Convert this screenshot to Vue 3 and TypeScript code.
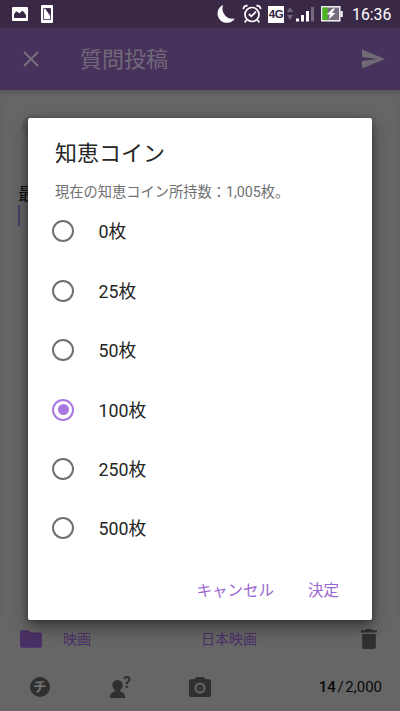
<script setup lang="ts">
import { ref } from 'vue'

const options: number[] = [0, 25, 50, 100, 250, 500]
const selected = ref<number>(100)
</script>

<template>
  <div class="screen">
    <div class="status">
      <svg class="picture" width="16" height="14" viewBox="0 0 16 14">
        <rect width="16" height="14" rx="1" fill="#fff" />
        <path d="M2 11V7.5Q3.5 4 5 4.5L7.5 6.5Q10 3 11.5 4.5L14 8V11Z" fill="#3a2847" />
      </svg>
      <svg class="note" width="12" height="18" viewBox="0 0 12 18">
        <rect width="12" height="18" rx="1" fill="#fff" />
        <path d="M2.5 3.5H9.5V14.5H2.5Z" fill="none" stroke="#3a2847" stroke-width=".8" />
        <path d="M4 3.5H9.7V11.5Z" fill="#3a2847" />
      </svg>
      <svg class="moon" width="20" height="20" viewBox="0 0 20 20">
        <path d="M7.2 1A9.3 9.3 0 1 0 18.8 14.4A10 10 0 0 1 7.2 1Z" fill="#fff" />
      </svg>
      <svg class="alarm" width="20" height="20" viewBox="0 0 20 20" fill="none" stroke="#fff">
        <circle cx="10" cy="10.5" r="7" stroke-width="1.7" />
        <path d="M1.3 5.2C1.6 3 3.5 1.6 5.6 1.7M18.7 5.2C18.4 3 16.5 1.6 14.4 1.7M4.7 16L2.6 18.4M15.3 16L17.4 18.4" stroke-width="1.7" />
        <path d="M6.8 10L9.3 12.3L14 7.7" stroke-width="1.8" />
      </svg>
      <span class="network">4G</span>
      <svg class="arrows" width="6" height="14" viewBox="0 0 6 14" fill="#72677c">
        <path d="M3 0L6 5H0ZM0 8H6L3 13Z" />
      </svg>
      <svg class="signal" width="18" height="16" viewBox="0 0 18 16" fill="#fff">
        <path d="M0 12.5H3V15.5H0ZM5 9H8V15.5H5ZM10 5H13V15.5H10Z" />
        <path d="M15 1H18V15.5H15Z" fill="#746a7c" />
      </svg>
      <svg class="battery" width="22" height="16" viewBox="0 0 22 16">
        <rect x=".8" y=".8" width="18" height="14" fill="#756d7d" stroke="#fff" stroke-width="1.4" />
        <rect x="1.5" y="1.5" width="5" height="12.6" fill="#48b51b" />
        <path d="M19.5 5H21.7V11H19.5Z" fill="#fff" />
        <path d="M12 2.5L5.7 8.5H9L7.8 13.2L14.5 7H11L14 2.5Z" fill="#fff" />
      </svg>
      <time>16:36</time>
    </div>

    <header>
      <svg width="16" height="16" viewBox="0 0 16 16" fill="none" stroke="#77707d" stroke-width="2">
        <path d="M1 1L15 15M15 1L1 15" />
      </svg>
      <h1>質問投稿</h1>
      <svg class="send" width="23" height="20" viewBox="0 0 24 20">
        <path d="M0 0L24 10L0 20V12.2L16 10L0 7.8Z" fill="#706a75" />
      </svg>
    </header>

    <main>
      <span class="avatar"></span>
      <p class="draft">最</p>
      <i class="caret"></i>
    </main>

    <div class="category">
      <svg width="22" height="18" viewBox="0 0 22.5 18">
        <path d="M2 0H8.5L11 2.3H20.5Q22.5 2.3 22.5 4.3V16Q22.5 18 20.5 18H2Q0 18 0 16V2Q0 0 2 0Z" fill="#493065" />
      </svg>
      <span class="parent">映画</span>
      <span class="child">日本映画</span>
      <svg class="trash" width="16" height="20" viewBox="0 0 16 20" fill="#303030">
        <path d="M0 1.2H4.3L5.2 0H10.8L11.7 1.2H16V3.5H0ZM1.2 5H14.8V18Q14.8 20 12.8 20H3.2Q1.2 20 1.2 18Z" />
      </svg>
    </div>

    <footer>
      <span class="coin">チ</span>
      <span class="person">
        <svg width="15" height="18" viewBox="0 0 15 18" fill="#303030">
          <path d="M7.5 0A5.2 5.2 0 0 1 12.7 5.2C12.7 7.5 11.3 9 10.2 10V11.5C12.8 12.6 15 13.7 15 16.3V18H0V16.3C0 13.7 2.2 12.6 4.8 11.5V10C3.7 9 2.3 7.5 2.3 5.2A5.2 5.2 0 0 1 7.5 0Z" />
        </svg>
        <b>?</b>
      </span>
      <svg class="camera" width="22" height="20" viewBox="0 0 22 20">
        <path d="M2 2.3H5.5L7.5 0H14.5L16.5 2.3H20Q22 2.3 22 4.3V18Q22 20 20 20H2Q0 20 0 18V4.3Q0 2.3 2 2.3Z" fill="#303030" />
        <circle cx="11" cy="11" r="4.5" fill="none" stroke="#666" stroke-width="2" />
        <circle cx="11" cy="11" r="1.5" fill="#484848" />
      </svg>
      <span class="count"><b>14</b> / 2,000</span>
    </footer>

    <section class="dialog" role="dialog">
      <h2>知恵コイン</h2>
      <p class="balance">現在の知恵コイン所持数：1,005枚。</p>
      <div class="options">
        <div v-for="value in options" :key="value" class="option" @click="selected = value">
          <span class="radio" :class="{ checked: selected === value }"></span>
          <span class="label">{{ value }}枚</span>
        </div>
      </div>
      <div class="actions">
        <span>キャンセル</span>
        <span>決定</span>
      </div>
    </section>
  </div>
</template>

<style>
body { margin: 0; overflow: hidden; }
</style>

<style scoped>
* { box-sizing: border-box; }
.screen { position: relative; display: flex; flex-direction: column; width: 400px; height: 711px; background: #666; font-family: Roboto, "Noto Sans CJK JP", sans-serif; }
svg { display: block; flex: none; }
span, time { white-space: nowrap; }
.status { display: flex; align-items: center; height: 28px; flex: none; padding-left: 12px; background: #3a2847; color: #fff; }
.note { margin-left: 13px; }
.moon { margin-left: 163px; }
.alarm { margin-left: 6px; }
.network { width: 16px; height: 17px; margin-left: 6px; background: #fff; color: #33233f; font: bold 11.5px/17px "Liberation Sans", sans-serif; letter-spacing: -.5px; text-align: center; }
.arrows { margin-left: 3px; }
.signal { margin-left: 3px; }
.battery { margin-left: 7px; }
time { margin-left: 9px; font-size: 15.8px; line-height: 28px; padding-top: 1px; }
header { display: flex; align-items: center; height: 62px; flex: none; padding: 0 15px 0 23px; background: #47325b; color: #716979; }
h1 { margin: 2px 0 0 41px; font-size: 22px; font-weight: 400; line-height: 30px; }
.send { margin-left: auto; }
main { position: relative; flex: 1; padding: 89px 18px 0; box-shadow: inset 0 5px 5px -3px #555; }
.avatar { position: absolute; left: 22px; top: 26px; width: 22px; height: 22px; border-radius: 50%; background: #5c5c5c; }
.draft { margin: 0; color: #101010; font-size: 17px; line-height: 30px; }
.caret { display: block; width: 2px; height: 21px; margin-top: -4px; background: #4b3b67; }
.category { display: flex; align-items: center; height: 46px; flex: none; padding: 0 23px 0 20px; color: #4b3069; font-size: 14px; }
.parent { margin: -3px 0 0 21px; }
.child { margin: -3px 0 0 110px; }
.trash { margin-left: auto; }
footer { display: flex; align-items: center; height: 49px; flex: none; padding: 0 18px 0 30px; }
.coin { width: 20px; height: 20px; border-radius: 50%; background: #303030; color: #777; font-size: 13px; font-weight: 700; line-height: 19px; text-align: center; }
.person { display: flex; align-items: flex-end; width: 22px; height: 22px; margin-left: 60px; }
.person b { align-self: flex-start; margin: -1px 0 0 -2px; color: #303030; font-size: 16px; line-height: 15px; }
.camera { margin-left: 57px; }
.count { margin-left: auto; color: #080808; font-size: 15px; word-spacing: -2px; }
.count b { font-weight: 500; }
.dialog { position: absolute; left: 28px; top: 118px; width: 344px; height: 502px; padding: 20px 24px 0 27px; border-radius: 2px; background: #fff; box-shadow: 0 7px 18px rgba(0,0,0,.42), 0 1px 6px rgba(0,0,0,.3); color: #262626; }
h2 { margin: 0; font-size: 22px; font-weight: 400; line-height: 32px; }
.balance { margin: 12px 0 0; color: #707070; font-size: 14.25px; line-height: 20px; }
.options { height: 356.7px; margin: -.5px 0 0 -3px; }
.option { display: flex; align-items: center; height: 59.45px; gap: 24.5px; font-size: 17.8px; line-height: 26px; }
.label { margin-top: 2px; }
.radio { display: flex; align-items: center; justify-content: center; flex: none; width: 22px; height: 22px; border: 2px solid #707070; border-radius: 50%; }
.checked { border-color: #a878df; }
.checked::after { content: ""; width: 11px; height: 11px; border-radius: 50%; background: #a878df; }
.actions { display: flex; justify-content: flex-end; gap: 34px; margin-top: 21px; padding-right: 9px; color: #9966d2; font-size: 15.5px; line-height: 24px; }
</style>
